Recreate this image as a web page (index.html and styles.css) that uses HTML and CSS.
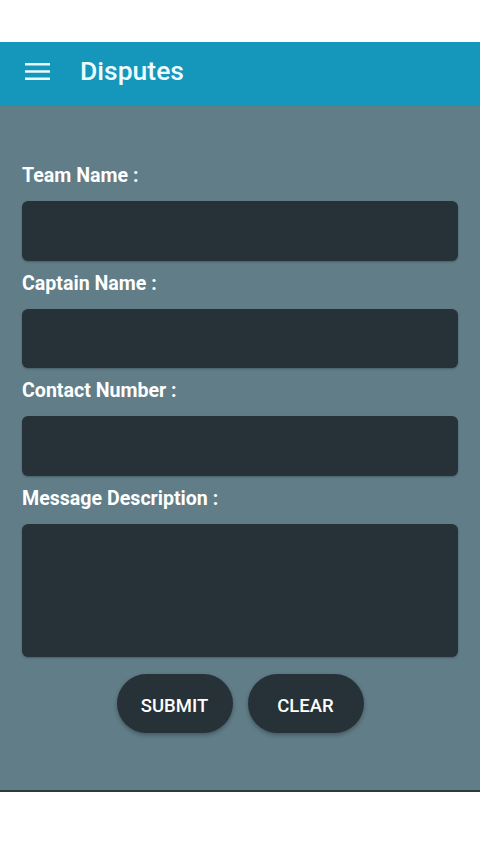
FILE: index.html
```html
<!DOCTYPE html>
<html lang="en">
<head>
    <meta charset="UTF-8">
    <meta name="viewport" content="width=device-width, initial-scale=1.0">
    <title>Disputes</title>
    <link rel="stylesheet" href="styles.css">
</head>
<body>
    <div class="screen">
        <div class="toolbar">
            <svg class="menu-icon" width="25" height="20" viewBox="0 0 25 20">
                <path d="M0 1h25v2.6H0zM0 8.2h25v2.6H0zM0 15.4h25v2.6H0z" fill="#e8fbff"/>
            </svg>
            <h1>Disputes</h1>
        </div>

        <!-- Dispute form -->
        <form class="dispute-form">
            <label for="teamName">Team Name :</label>
            <input type="text" id="teamName" />
            <label for="captainName">Captain Name :</label>
            <input type="text" id="captainName" />
            <label for="contactNumber">Contact Number :</label>
            <input type="text" id="contactNumber" />
            <label for="message">Message Description :</label>
            <textarea id="message"></textarea>
            <div class="buttons">
                <button type="button">SUBMIT</button>
                <button type="reset">CLEAR</button>
            </div>
        </form>
    </div>
</body>
</html>
```

FILE: styles.css
```css
body {
    margin: 0;
    background-color: #ffffff;
    font-family: Roboto, "Noto Sans", sans-serif;
}
.screen {
    margin-top: 42px;
    background-color: #607d88;
    border-bottom: 2px solid #2b3a40;
    height: 750px;
    box-sizing: border-box;
}
.toolbar {
    background-color: #1597bb;
    height: 64px;
    display: flex;
    align-items: center;
    padding-left: 25px;
}
.menu-icon {
    margin-right: 30px;
    margin-top: -5px;
}
.toolbar h1 {
    color: #eefcff;
    margin: 0 0 8px 0;
    font-size: 26.5px;
    font-weight: 500;
}
.dispute-form {
    display: flex;
    flex-direction: column;
    padding: 58px 22px 0 22px;
}
.dispute-form label {
    color: #ffffff;
    font-size: 19.6px;
    font-weight: 700;
    line-height: 24px;
    margin-bottom: 13px;
}
.dispute-form input, .dispute-form textarea {
    background-color: #263238;
    border: none;
    border-radius: 6px;
    height: 59.5px;
    margin-bottom: 11px;
    box-shadow: 0 1px 2px rgba(0, 0, 0, 0.25);
    color: white;
    font-size: 16px;
    padding: 0 12px;
}
.dispute-form textarea {
    height: 133px;
    resize: none;
    margin-bottom: 17px;
}
.buttons {
    display: flex;
    justify-content: center;
    gap: 15px;
}
.buttons button {
    width: 116px;
    height: 59px;
    border: none;
    border-radius: 30px;
    padding: 6px 0 0 0;
    background-color: #263238;
    color: #ffffff;
    font-family: Roboto, sans-serif;
    font-size: 18.5px;
    font-weight: 500;
    box-shadow: 0 2px 4px rgba(0, 0, 0, 0.3);
}
```
